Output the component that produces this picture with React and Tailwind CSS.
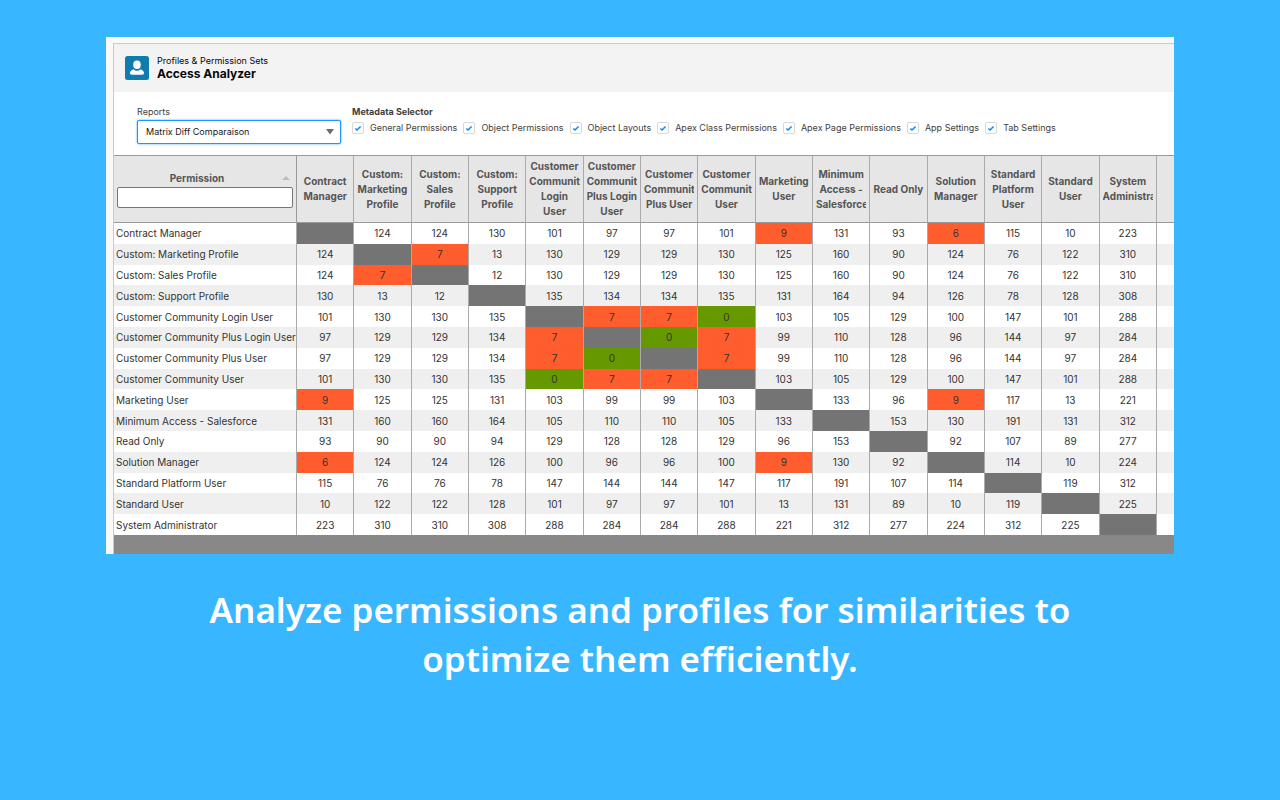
import React, { useState } from "react";

const columns = [
  "Contract Manager",
  "Custom: Marketing Profile",
  "Custom: Sales Profile",
  "Custom: Support Profile",
  "Customer Community Login User",
  "Customer Community Plus Login User",
  "Customer Community Plus User",
  "Customer Community User",
  "Marketing User",
  "Minimum Access - Salesforce",
  "Read Only",
  "Solution Manager",
  "Standard Platform User",
  "Standard User",
  "System Administrator",
];

const rows = [
  [null, 124, 124, 130, 101, 97, 97, 101, 9, 131, 93, 6, 115, 10, 223],
  [124, null, 7, 13, 130, 129, 129, 130, 125, 160, 90, 124, 76, 122, 310],
  [124, 7, null, 12, 130, 129, 129, 130, 125, 160, 90, 124, 76, 122, 310],
  [130, 13, 12, null, 135, 134, 134, 135, 131, 164, 94, 126, 78, 128, 308],
  [101, 130, 130, 135, null, 7, 7, 0, 103, 105, 129, 100, 147, 101, 288],
  [97, 129, 129, 134, 7, null, 0, 7, 99, 110, 128, 96, 144, 97, 284],
  [97, 129, 129, 134, 7, 0, null, 7, 99, 110, 128, 96, 144, 97, 284],
  [101, 130, 130, 135, 0, 7, 7, null, 103, 105, 129, 100, 147, 101, 288],
  [9, 125, 125, 131, 103, 99, 99, 103, null, 133, 96, 9, 117, 13, 221],
  [131, 160, 160, 164, 105, 110, 110, 105, 133, null, 153, 130, 191, 131, 312],
  [93, 90, 90, 94, 129, 128, 128, 129, 96, 153, null, 92, 107, 89, 277],
  [6, 124, 124, 126, 100, 96, 96, 100, 9, 130, 92, null, 114, 10, 224],
  [115, 76, 76, 78, 147, 144, 144, 147, 117, 191, 107, 114, null, 119, 312],
  [10, 122, 122, 128, 101, 97, 97, 101, 13, 131, 89, 10, 119, null, 225],
  [223, 310, 310, 308, 288, 284, 284, 288, 221, 312, 277, 224, 312, 225, null],
];

const metadata = [
  "General Permissions",
  "Object Permissions",
  "Object Layouts",
  "Apex Class Permissions",
  "Apex Page Permissions",
  "App Settings",
  "Tab Settings",
];

function tone(value) {
  if (value === null) return "bg-[#747474]";
  if (value === 0) return "bg-[#669900]";
  if (value < 10) return "bg-[#ff5d2d]";
  return "";
}

function MetadataOption({ label }) {
  return (
    <label className="flex items-center gap-1.5">
      <span className="grid">
        <input
          type="checkbox"
          defaultChecked
          className="peer col-start-1 row-start-1 size-3 appearance-none rounded-xs border border-[#d8d8d8] bg-white"
        />
        <svg
          viewBox="0 0 12 12"
          className="pointer-events-none invisible col-start-1 row-start-1 size-3 peer-checked:visible"
          aria-hidden="true"
        >
          <path d="M3.3 6.5 L5 8 L8.6 4.5" fill="none" stroke="#1589ee" strokeWidth="1.6" />
        </svg>
      </span>
      {label}
    </label>
  );
}

function Header() {
  return (
    <header className="flex h-12 items-center gap-2 bg-[#f3f3f3] px-[11px]">
      <svg viewBox="0 0 24 24" className="size-6" aria-hidden="true">
        <rect width="24" height="24" rx="2.5" fill="#107cad" />
        <ellipse cx="12" cy="8.8" rx="3.8" ry="4.3" fill="#fff" />
        <path
          d="M8.6 13.2c.9 1 2.100 1.600 3.400 1.600s2.500-.6 3.400-1.600c2.100.8 3.600 2 3.600 3.800 0 1-.8 1.700-1.800 1.700H6.800c-1 0-1.800-.7-1.800-1.700 0-1.800 1.500-3 3.600-3.800z"
          fill="#fff"
        />
      </svg>
      <div className="text-[#080707]">
        <p className="text-[9px] leading-3">Profiles &amp; Permission Sets</p>
        <h1 className="text-[12px] leading-[14px] font-bold">Access Analyzer</h1>
      </div>
    </header>
  );
}

function Filters() {
  return (
    <section className="flex h-[63px] items-start gap-[11px] bg-white pt-3.5 pl-[23px] text-[9px] leading-3 text-[#3e3e3c]">
      <div className="w-[204px] shrink-0">
        <label htmlFor="report" className="block">
          Reports
        </label>
        <div className="mt-0.5 grid items-center">
          <select
            id="report"
            className="col-start-1 row-start-1 h-6 w-full appearance-none rounded-xs border border-[#1b96ff] bg-white pl-2 text-[#181818] shadow-[0_0_2px_#1b96ff] outline-none"
          >
            <option>Matrix Diff Comparaison</option>
          </select>
          <svg
            viewBox="0 0 8 6"
            className="pointer-events-none col-start-1 row-start-1 mr-[7px] h-1.5 w-2 justify-self-end"
            aria-hidden="true"
          >
            <path d="M0 0H8L4 5.5Z" fill="#706e6b" />
          </svg>
        </div>
      </div>
      <fieldset className="min-w-0">
        <legend className="font-bold">Metadata Selector</legend>
        <div className="mt-1 flex gap-1.5 whitespace-nowrap">
          {metadata.map((m) => (
            <MetadataOption key={m} label={m} />
          ))}
        </div>
      </fieldset>
    </section>
  );
}

function Matrix() {
  const [filter, setFilter] = useState("");
  return (
    <table className="h-[380px] w-full table-fixed border-separate border-spacing-0 text-[10px] text-[#333333]">
      <colgroup>
        <col className="w-[183px]" />
        {columns.map((c) => (
          <col key={c} />
        ))}
        <col className="w-[17px]" />
      </colgroup>
      <thead>
        <tr className="h-[68px] bg-[#e6e6e6] text-[#555555]">
          <th className="border-y border-r border-[#999999] px-[3px] align-middle">
            <div className="grid items-center leading-[15px]">
              <span className="col-start-1 row-start-1 pr-4">Permission</span>
              <svg
                viewBox="0 0 8 4"
                className="col-start-1 row-start-1 mr-[3px] h-1 w-2 justify-self-end"
                aria-hidden="true"
              >
                <path d="M0 4H8L4 0Z" fill="#bbbbbb" />
              </svg>
            </div>
            <input
              type="text"
              aria-label="Filter permissions"
              value={filter}
              onChange={(e) => setFilter(e.target.value)}
              className="mt-px block h-[21px] w-full rounded-xs border border-[#767676] bg-white px-1 font-normal"
            />
          </th>
          {columns.map((c) => (
            <th
              key={c}
              className="border-y border-r border-y-[#999999] border-r-[#aaaaaa] px-[3px] py-0 text-center align-middle leading-[15px]"
            >
              <div className="overflow-hidden">{c.replace("Plus Login", "Plus\u00a0Login")}</div>
            </th>
          ))}
          <td className="border-y border-[#999999]"></td>
        </tr>
      </thead>
      <tbody>
        {rows.map((row, i) => (
          <tr
            key={columns[i]}
            className={
              columns[i].toLowerCase().includes(filter.toLowerCase())
                ? "odd:bg-white even:bg-[#efefef]"
                : "hidden"
            }
          >
            <th
              scope="row"
              className="border-r border-[#aaaaaa] py-0 pl-0.5 text-left leading-5 font-normal whitespace-nowrap"
            >
              {columns[i]}
            </th>
            {row.map((v, j) => (
              <td key={j} className={`border-r border-[#aaaaaa] text-center leading-5 ${tone(v)}`}>
                {v}
              </td>
            ))}
            <td></td>
          </tr>
        ))}
      </tbody>
    </table>
  );
}

export default function App() {
  return (
    <main className="flex min-h-screen flex-col items-center bg-[#38b6ff] pt-[37px] font-['Inter',sans-serif]">
      <div className="w-full max-w-[1068px] overflow-hidden bg-[#fafafa] pt-1.5 pl-[7px]">
        <div className="border-t border-l border-[#c9c9c9]">
          <Header />
          <Filters />
          <Matrix />
          <div className="h-[19px] bg-[#888888]"></div>
        </div>
      </div>
      <p className="mt-[31px] max-w-[920px] text-center font-['Noto_Sans',sans-serif] text-[35px] leading-[49px] font-semibold text-white">
        Analyze permissions and profiles for similarities to optimize them efficiently.
      </p>
    </main>
  );
}
